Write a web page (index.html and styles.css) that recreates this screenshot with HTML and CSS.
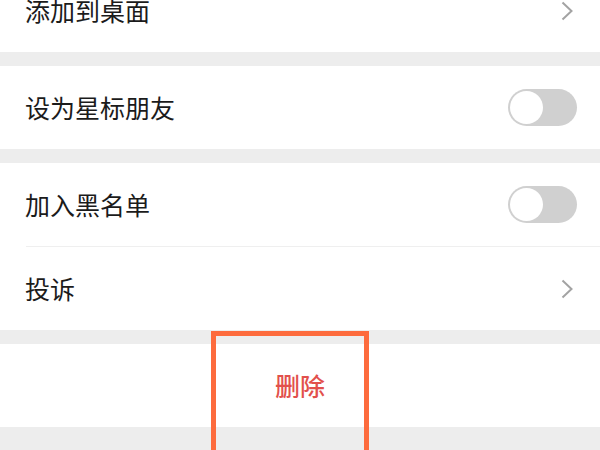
FILE: index.html
```html
<!DOCTYPE html>
<html lang="zh-CN">
<head>
<meta charset="utf-8">
<title>设置</title>
<link rel="stylesheet" href="styles.css">
</head>
<body>
<div class="page">
  <div class="group">
    <div class="row">
      <span class="label">添加到桌面</span>
      <svg class="chevron" width="12" height="20" viewBox="0 0 12 20"><polyline points="1.5,1.5 10.5,10 1.5,18.5" fill="none" stroke="#a3a3a3" stroke-width="2" stroke-linejoin="miter"/></svg>
    </div>
  </div>
  <div class="group">
    <div class="row">
      <span class="label">设为星标朋友</span>
      <span class="toggle"><span class="knob"></span></span>
    </div>
  </div>
  <div class="group">
    <div class="row">
      <span class="label">加入黑名单</span>
      <span class="toggle"><span class="knob"></span></span>
    </div>
    <div class="divider"></div>
    <div class="row">
      <span class="label">投诉</span>
      <svg class="chevron" width="12" height="20" viewBox="0 0 12 20"><polyline points="1.5,1.5 10.5,10 1.5,18.5" fill="none" stroke="#a3a3a3" stroke-width="2" stroke-linejoin="miter"/></svg>
    </div>
  </div>
  <div class="group">
    <div class="row row-center">
      <span class="label danger">删除</span>
    </div>
  </div>
</div>
<div class="highlight"></div>
</body>
</html>
```
FILE: styles.css
```css
html, body {
  margin: 0;
  padding: 0;
  background: #ededed;
  width: 600px;
  height: 450px;
  overflow: hidden;
  font-family: "Noto Sans CJK SC", "Noto Sans", sans-serif;
}
.page {
  margin-top: -31px;
}
.group {
  background: #ffffff;
  margin-bottom: 14px;
}
.row {
  height: 83px;
  box-sizing: border-box;
  display: flex;
  align-items: center;
  justify-content: space-between;
  padding: 0 23px 0 25px;
}
.row-center {
  justify-content: center;
  padding: 0;
}
.label {
  font-size: 25px;
  color: #1b1b1b;
  padding-top: 0;
  line-height: 1;
}
.danger {
  color: #e2504c;
  font-weight: 500;
}
.chevron {
  margin-right: 4px;
  display: block;
}
.toggle {
  width: 69px;
  height: 37px;
  border-radius: 19px;
  background: #d0d0d0;
  display: flex;
  align-items: center;
  padding-left: 2px;
  box-sizing: border-box;
}
.knob {
  width: 33px;
  height: 33px;
  border-radius: 50%;
  background: #ffffff;
}
.divider {
  height: 1px;
  margin-left: 26px;
  background: #efefef;
}
.highlight {
  position: absolute;
  left: 211px;
  top: 331px;
  width: 158px;
  height: 130px;
  box-sizing: border-box;
  border: 5px solid #fd6b3d;
  border-bottom: none;
}
```
